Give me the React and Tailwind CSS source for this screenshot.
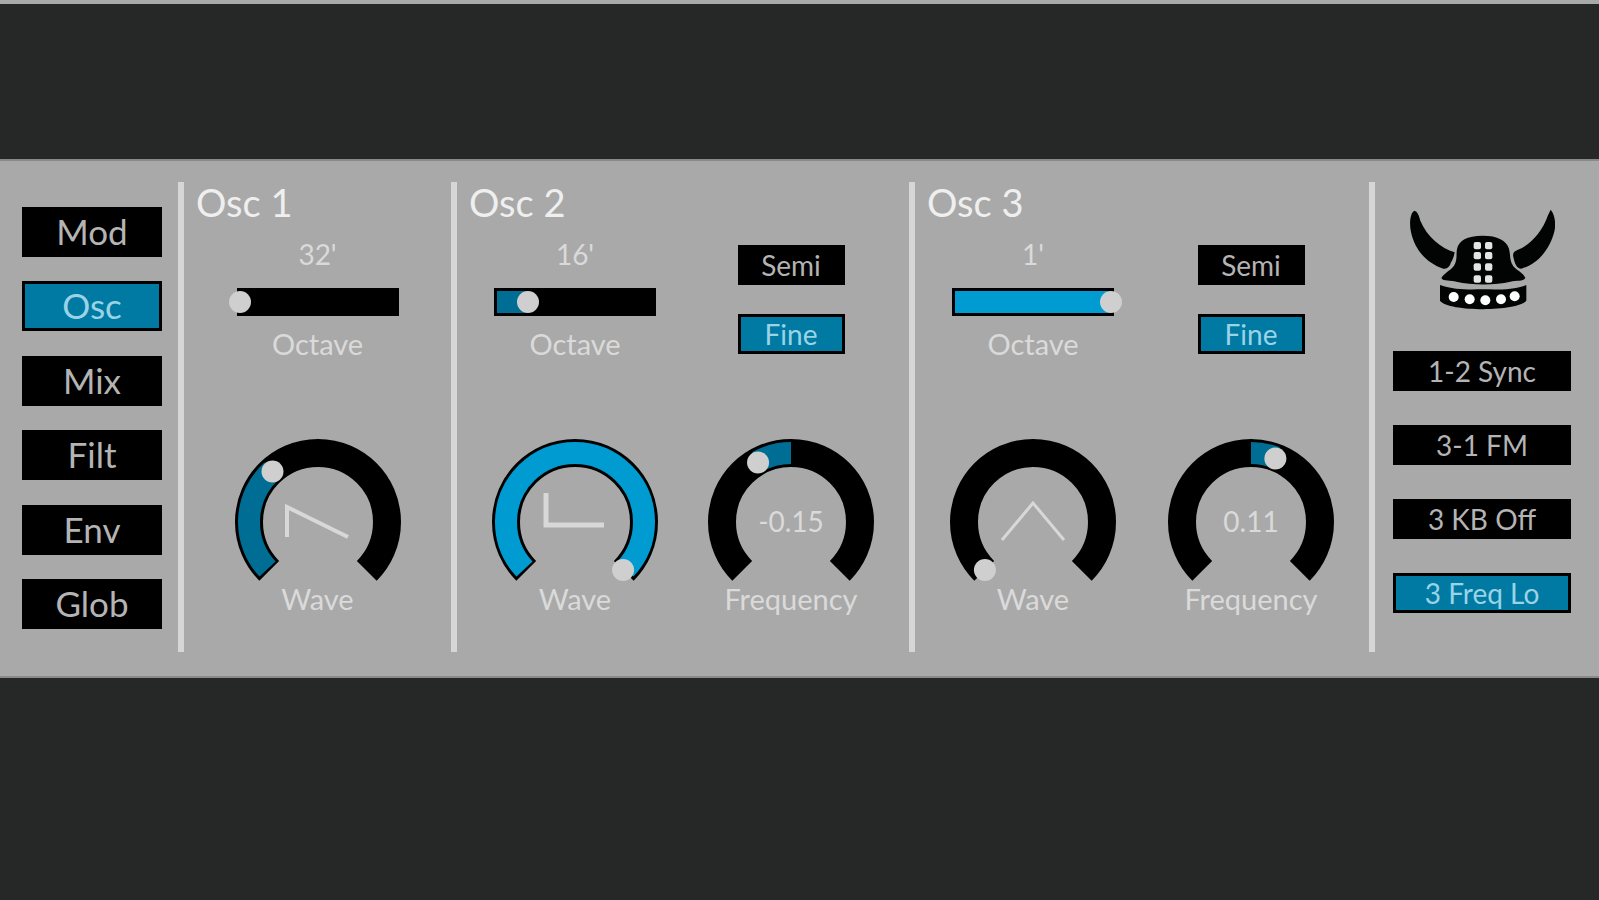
import { useState } from 'react';
import clsx from 'clsx';

const PAGES = ['Mod', 'Osc', 'Mix', 'Filt', 'Env', 'Glob'];
const OCTAVES = ["32'", "16'", "8'", "4'", "2'", "1'"];
const ROUTING = ['1-2 Sync', '3-1 FM', '3 KB Off', '3 Freq Lo'];

// Waveform glyphs, drawn in the knob's own coordinates
const WAVES = {
  saw: { points: '52,98 52,68 113,98', width: 4 },
  pulse: { points: '54,54 54,86 112,86', width: 5 },
  triangle: { points: '52,101 83,64 114,101', width: 3 },
};

const CENTER = 83;
const RADIUS = 69;
const MAX_ANGLE = 135;

function polar(angle, radius = RADIUS) {
  const rad = (angle * Math.PI) / 180;
  return [CENTER + radius * Math.sin(rad), CENTER - radius * Math.cos(rad)];
}

function arc(from, to) {
  const [x1, y1] = polar(from);
  const [x2, y2] = polar(to);
  const large = to - from > 180 ? 1 : 0;
  return `M${x1} ${y1}A${RADIUS} ${RADIUS} 0 ${large} 1 ${x2} ${y2}`;
}

function PushButton({ children, active, onClick, large, className }) {
  return (
    <button
      type="button"
      aria-pressed={active}
      onClick={onClick}
      className={clsx(
        'flex items-center justify-center border-3 border-black',
        large ? 'h-[50px] pb-0.5 text-[35px] leading-9' : 'h-10 text-[28px] leading-8',
        active ? 'bg-[#007aa3] text-[#9ad3e5]' : 'bg-black text-[#b4b4b4]',
        className
      )}
    >
      {children}
    </button>
  );
}

function OctaveSlider({ initial }) {
  const [value, setValue] = useState(initial);
  const last = OCTAVES.length - 1;

  return (
    <label className="flex flex-col items-center text-[28px] leading-8 text-[#dadada]">
      <span>{OCTAVES[value]}</span>
      <span className="relative mt-[18px] mb-3 block h-7 w-[162px] border-3 border-black bg-black">
        <span
          className={clsx('block h-full', value === last ? 'bg-[#009bd0]' : 'bg-[#006e94]')}
          style={{ width: `${(value / last) * 100}%` }}
        />
        <input
          type="range"
          min={0}
          max={last}
          value={value}
          onChange={(e) => setValue(Number(e.target.value))}
          className="absolute -left-[11px] top-0 h-full w-[178px] cursor-pointer appearance-none bg-transparent [&::-webkit-slider-thumb]:size-[22px] [&::-webkit-slider-thumb]:appearance-none [&::-webkit-slider-thumb]:rounded-full [&::-webkit-slider-thumb]:bg-[#cfcfd0]"
        />
      </span>
      <span className="text-[29px]">Octave</span>
    </label>
  );
}

function Knob({ label, initial, bipolar, wave, display }) {
  const [angle, setAngle] = useState(initial);
  const [thumbX, thumbY] = polar(angle, 68);
  // Keep a thin black outline at both ends of the track
  const limit = MAX_ANGLE - 2;
  const end = Math.max(-limit, Math.min(limit, angle));
  const from = bipolar ? Math.min(0, end) : -limit;
  const to = bipolar ? Math.max(0, end) : end;
  const full = angle >= MAX_ANGLE;

  return (
    <label className="relative flex w-[166px] flex-col items-center text-[28px] leading-8 text-[#dadada]">
      <svg width="166" height="144" viewBox="0 0 166 144" fill="none" aria-hidden="true">
        <path d={arc(-MAX_ANGLE, MAX_ANGLE)} stroke="#000" strokeWidth="28" />
        {to > from && (
          <path d={arc(from, to)} stroke={full ? '#009bd0' : '#006e94'} strokeWidth="22" />
        )}
        <circle cx={thumbX} cy={thumbY} r="11" fill="#cfcfd0" />
        {wave && (
          <polyline points={WAVES[wave].points} stroke="#d8d8d8" strokeWidth={WAVES[wave].width} />
        )}
      </svg>
      {display && (
        <span className="absolute inset-x-0 top-0 flex h-[164px] items-center justify-center">
          {display}
        </span>
      )}
      <span className="text-[29px]">{label}</span>
      <input
        type="range"
        min={-MAX_ANGLE}
        max={MAX_ANGLE}
        value={angle}
        onChange={(e) => setAngle(Number(e.target.value))}
        className="absolute inset-x-0 top-0 h-36 cursor-pointer opacity-0"
      />
    </label>
  );
}

function TuneButtons() {
  const [mode, setMode] = useState('Fine');
  return (
    <div className="flex w-[166px] flex-col items-center gap-[29px] pt-[7px]">
      {['Semi', 'Fine'].map((name) => (
        <PushButton
          key={name}
          active={mode === name}
          onClick={() => setMode(name)}
          className="w-[107px]"
        >
          {name}
        </PushButton>
      ))}
    </div>
  );
}

function Oscillator({ title, octave, wave, frequency }) {
  const rowClass = clsx('flex px-[35px]', frequency ? 'justify-between' : 'justify-center');
  return (
    <section className="border-l-6 border-[#d6d6d6]">
      <h2 className="pl-3 text-[38px] leading-10 text-[#efefef]">{title}</h2>
      <div className={clsx(rowClass, 'mt-4')}>
        <div className="flex w-[166px] justify-center">
          <OctaveSlider initial={octave} />
        </div>
        {frequency && <TuneButtons />}
      </div>
      <div className={clsx(rowClass, 'mt-[79px]')}>
        <Knob label="Wave" initial={wave.angle} wave={wave.shape} />
        {frequency && (
          <Knob label="Frequency" initial={frequency.angle} display={frequency.text} bipolar />
        )}
      </div>
    </section>
  );
}

function VikingHelmet() {
  return (
    <svg width="145" height="102" viewBox="27 27 435 306" role="img" aria-label="Viking helmet">
      <g fill="#020404">
        <path d="M40 32C28 38 24 70 30 96C41 150 78 190 127 206C140 208 147 198 150 187C156 178 159 168 161 157C120 145 78 110 58 62C54 45 49 34 40 32Z" />
        <path d="M449 29C460 42 465 64 461 90C449 145 411 193 361 206C347 206 341 190 337 171C334 159 340 153 351 149C386 137 424 96 441 46Z" />
        <path d="M245 107C198 107 172 122 168 148C165 160 170 180 159 197C148 212 128 220 121 234C127 245 150 240 166 245C214 256 282 256 328 245C346 240 366 246 373 234C367 219 348 212 337 199C325 182 329 166 324 146C316 121 290 107 245 107Z" />
        <path d="M117 255C160 271 208 268 245 268C286 268 334 271 376 255L376 302C350 336 143 336 117 302Z" />
      </g>
      <g fill="#e4e4e4">
        {[137, 167, 201, 237].map((y) => (
          <g key={y}>
            <rect x="218" y={y - 11} width="22" height="22" rx="6" />
            <rect x="252" y={y - 11} width="22" height="22" rx="6" />
          </g>
        ))}
      </g>
      <g fill="#fff">
        <circle cx="158" cy="291" r="15" />
        <circle cx="206" cy="298" r="15" />
        <circle cx="253" cy="301" r="15" />
        <circle cx="300" cy="298" r="15" />
        <circle cx="341" cy="289" r="15" />
      </g>
    </svg>
  );
}

export default function App() {
  const [page, setPage] = useState('Osc');
  const [routing, setRouting] = useState({ '3 Freq Lo': true });

  const toggleRouting = (name) => {
    setRouting((prev) => ({ ...prev, [name]: !prev[name] }));
  };

  return (
    <div className="min-h-screen border-t-4 border-[#a9a9a9] bg-[#262827] font-['Lato',sans-serif]">
      <main className="pt-[155px]">
        <div className="grid grid-cols-[178px_273fr_458fr_460fr_230px] border-y-2 border-[#8a8a8a] bg-[#a9a9a9] pt-[21px] pb-6">
          <nav className="flex h-[470px] flex-col justify-between pt-[25px] pr-4 pb-[23px] pl-[22px]">
            {PAGES.map((name) => (
              <PushButton key={name} large active={page === name} onClick={() => setPage(name)}>
                {name}
              </PushButton>
            ))}
          </nav>

          <Oscillator title="Osc 1" octave={0} wave={{ angle: -42, shape: 'saw' }} />
          <Oscillator
            title="Osc 2"
            octave={1}
            wave={{ angle: 135, shape: 'pulse' }}
            frequency={{ angle: -29, text: '-0.15' }}
          />
          <Oscillator
            title="Osc 3"
            octave={5}
            wave={{ angle: -135, shape: 'triangle' }}
            frequency={{ angle: 21, text: '0.11' }}
          />

          <aside className="flex flex-col gap-[34px] border-l-6 border-[#d6d6d6] pt-[27px] pr-7 pl-[18px]">
            <div className="mb-1.5 flex justify-center">
              <VikingHelmet />
            </div>
            {ROUTING.map((name) => (
              <PushButton
                key={name}
                active={Boolean(routing[name])}
                onClick={() => toggleRouting(name)}
              >
                {name}
              </PushButton>
            ))}
          </aside>
        </div>
      </main>
    </div>
  );
}
